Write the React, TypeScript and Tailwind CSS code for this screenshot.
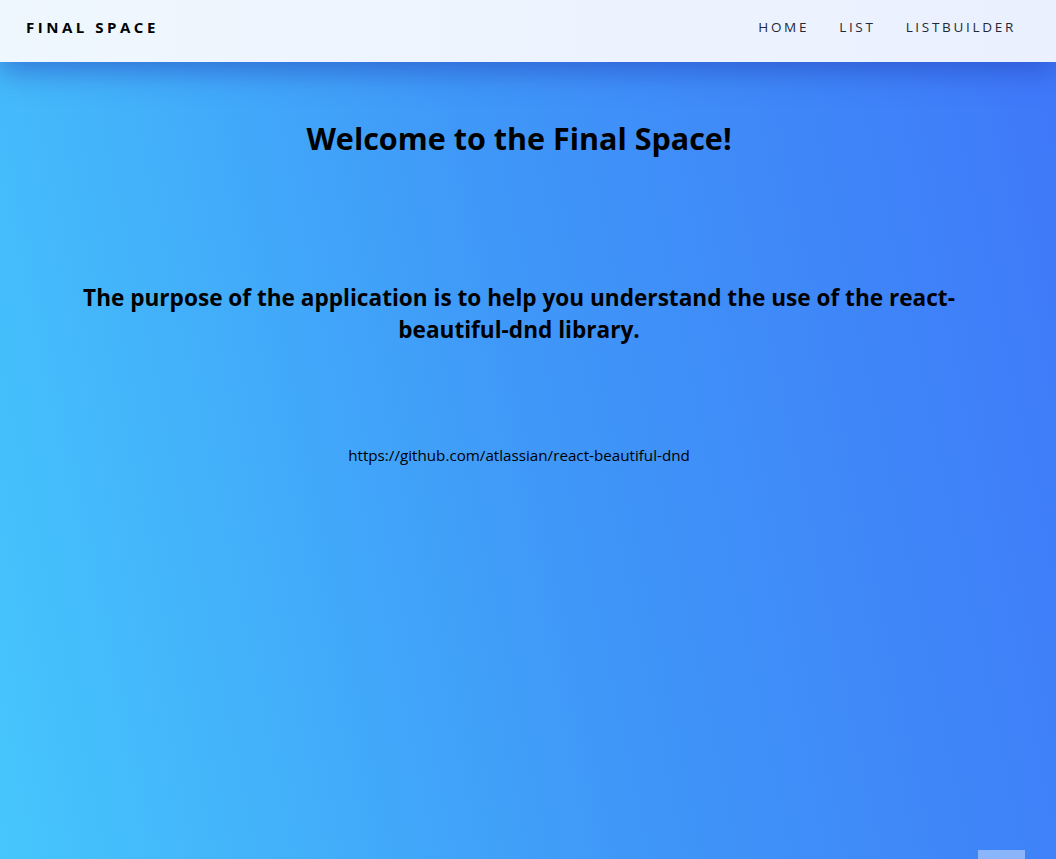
import { JSX } from 'react';

const navLinks: string[] = ['Home', 'List', 'ListBuilder'];

function Header(): JSX.Element {
  return (
    <header className="relative z-10 h-[62px] flex items-start justify-between pt-[16px] pl-[26px] pr-[40px] bg-[linear-gradient(90deg,#eff7fe,#ebf0fe)] shadow-[0_8px_30px_rgba(35,60,180,0.55)]">
      <span className="text-[15px] leading-[22px] font-bold tracking-[0.235em] text-black">FINAL SPACE</span>
      <nav className="flex items-center gap-[30px]">
        {navLinks.map(link => (
          <a key={link} href="#" className="text-[13.5px] leading-[22px] uppercase tracking-[0.2em] text-[#1f2937]">
            {link}
          </a>
        ))}
      </nav>
    </header>
  );
}

function App(): JSX.Element {
  return (
    <div className="min-h-screen bg-[linear-gradient(78deg,#46c6fc,#3f98f8_50%,#3f78f9)] font-['Open_Sans',sans-serif] text-black overflow-hidden">
      <Header />
      <main className="flex flex-col items-center pr-[18px] text-center">
        <h1 className="mt-[54px] text-[30.5px] leading-[44px] font-bold">Welcome to the Final Space!</h1>
        <h2 className="mt-[122px] w-[920px] text-[22.6px] leading-[32px] font-bold">
          The purpose of the application is to help you understand the use of the react-beautiful-dnd library.
        </h2>
        <p className="mt-[98px] text-[15.2px] leading-[22px]">https://github.com/atlassian/react-beautiful-dnd</p>
      </main>
      <div className="fixed right-[31px] bottom-[-20px] w-[47px] h-[29px] bg-white/40" />
    </div>
  );
}

export default App;
